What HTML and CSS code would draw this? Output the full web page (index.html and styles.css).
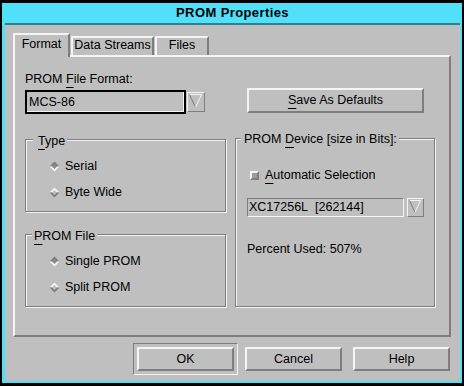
FILE: index.html
```html
<!DOCTYPE html>
<html lang="en">
<head>
    <meta charset="UTF-8">
    <title>PROM Properties</title>
    <link rel="stylesheet" href="styles.css">
</head>
<body>

    <div class="window">
        <div class="frame">
            <div class="titlebar">PROM Properties</div>
            <div class="client">
                <div class="tabs">
                    <div class="tab active tab-format">Format</div>
                    <div class="tab tab-streams">Data Streams</div>
                    <div class="tab tab-files">Files</div>
                </div>

                <div class="panel">
                    <div class="panel-top">
                        <div>
                            <div class="field-label">PROM <u>F</u>ile Format:</div>
                            <div class="combo">
                                <div class="text-field focused">MCS-86</div>
                                <div class="arrow-btn">
                                    <svg width="16" height="18" viewBox="0 0 16 18">
                                        <line x1="1.5" y1="1.5" x2="13.5" y2="1.5" stroke="#f4f4f4"/>
                                        <line x1="1.5" y1="1.5" x2="7.5" y2="14.5" stroke="#7e7e7e"/>
                                        <line x1="13.5" y1="1.5" x2="7.5" y2="14.5" stroke="#f4f4f4"/>
                                    </svg>
                                </div>
                            </div>
                        </div>
                        <div>
                            <div class="push-btn save-btn"><u>S</u>ave As Defaults</div>
                        </div>
                    </div>

                    <div class="panel-groups">
                        <div class="left-col">
                            <div class="group">
                                <span class="group-title title-type"><u>T</u>ype</span>
                                <div class="radio-list">
                                    <div class="radio-row">
                                        <svg class="diamond" width="11" height="11" viewBox="0 0 11 11">
                                            <polygon points="0.5,5.5 5.5,0.5 10.5,5.5" fill="#7e7e7e"/>
                                            <polygon points="0.5,5.5 5.5,10.5 10.5,5.5" fill="#f4f4f4"/>
                                            <polygon points="5.5,3 8,5.5 5.5,8 3,5.5" fill="#8a8a8a"/>
                                        </svg>
                                        Serial
                                    </div>
                                    <div class="radio-row">
                                        <svg class="diamond" width="11" height="11" viewBox="0 0 11 11">
                                            <polygon points="0.5,5.5 5.5,0.5 10.5,5.5" fill="#f4f4f4"/>
                                            <polygon points="0.5,5.5 5.5,10.5 10.5,5.5" fill="#7e7e7e"/>
                                            <polygon points="5.5,3 8,5.5 5.5,8 3,5.5" fill="#bfbfbf"/>
                                        </svg>
                                        Byte Wide
                                    </div>
                                </div>
                            </div>

                            <div class="group group-file">
                                <span class="group-title"><u>P</u>ROM File</span>
                                <div class="radio-list">
                                    <div class="radio-row">
                                        <svg class="diamond" width="11" height="11" viewBox="0 0 11 11">
                                            <polygon points="0.5,5.5 5.5,0.5 10.5,5.5" fill="#7e7e7e"/>
                                            <polygon points="0.5,5.5 5.5,10.5 10.5,5.5" fill="#f4f4f4"/>
                                            <polygon points="5.5,3 8,5.5 5.5,8 3,5.5" fill="#8a8a8a"/>
                                        </svg>
                                        Single PROM
                                    </div>
                                    <div class="radio-row">
                                        <svg class="diamond" width="11" height="11" viewBox="0 0 11 11">
                                            <polygon points="0.5,5.5 5.5,0.5 10.5,5.5" fill="#f4f4f4"/>
                                            <polygon points="0.5,5.5 5.5,10.5 10.5,5.5" fill="#7e7e7e"/>
                                            <polygon points="5.5,3 8,5.5 5.5,8 3,5.5" fill="#bfbfbf"/>
                                        </svg>
                                        Split PROM
                                    </div>
                                </div>
                            </div>
                        </div>

                        <div class="group group-device">
                            <span class="group-title title-device">PROM <u>D</u>evice [size in Bits]:</span>
                            <div class="device-body">
                                <div class="check-row">
                                    <span class="checkbox"></span>
                                    <span><u>A</u>utomatic Selection</span>
                                </div>
                                <div class="combo combo-device">
                                    <div class="text-field">XC17256L&nbsp;&nbsp;[262144]</div>
                                    <div class="arrow-btn">
                                        <svg width="15" height="17" viewBox="0 0 15 17">
                                            <line x1="1.5" y1="1.5" x2="12.5" y2="1.5" stroke="#f4f4f4"/>
                                            <line x1="1.5" y1="1.5" x2="7" y2="13.5" stroke="#7e7e7e"/>
                                            <line x1="12.5" y1="1.5" x2="7" y2="13.5" stroke="#f4f4f4"/>
                                        </svg>
                                    </div>
                                </div>
                                <div class="percent">Percent Used: 507%</div>
                            </div>
                        </div>
                    </div>
                </div>

                <div class="actions">
                    <div class="default-ring">
                        <div class="push-btn">OK</div>
                    </div>
                    <div class="push-btn btn-cancel">Cancel</div>
                    <div class="push-btn btn-help">Help</div>
                </div>
            </div>
        </div>
    </div>

</body>
</html>
```

FILE: styles.css
```css
body {
    margin: 0;
    background: #000;
    font-family: 'Liberation Sans', Arial, sans-serif;
    font-size: 12.5px;
    line-height: 15px;
    color: #000;
}
u {
    text-decoration: underline;
    text-underline-offset: 4px;
    text-decoration-thickness: 1px;
}
.window {
    width: 464px;
    height: 386px;
    box-sizing: border-box;
    padding: 3px 2px;
    background: #000;
}
.frame {
    height: 100%;
    box-sizing: border-box;
    padding: 0 2px 2px 3px;
    background: #50e0fa;
    display: flex;
    flex-direction: column;
}
.titlebar {
    height: 22px;
    box-sizing: border-box;
    border-bottom: 2px solid #2f7f8f;
    line-height: 20px;
    text-align: center;
    font-weight: bold;
    font-size: 13px;
    letter-spacing: 0.4px;
}
.client {
    flex: 1;
    background: #bfbfbf;
    padding: 8px 9px 0 8px;
    display: flex;
    flex-direction: column;
}

/* tabs */
.tabs {
    display: flex;
    align-items: flex-end;
    gap: 1px;
    margin-bottom: -2px;
    position: relative;
    z-index: 1;
}
.tab {
    height: 19px;
    box-sizing: border-box;
    margin-bottom: 2px;
    border-top: 2px solid #f4f4f4;
    border-left: 2px solid #f4f4f4;
    border-right: 2px solid #7e7e7e;
    background: #bfbfbf;
    text-align: center;
}
.tab.active {
    height: 24px;
    margin-bottom: 0;
    padding-top: 2px;
}
.tab-format { width: 57px; }
.tab-streams { width: 83px; }
.tab-files { width: 54px; }

.panel {
    height: 282px;
    box-sizing: border-box;
    border: 2px solid;
    border-color: #f4f4f4 #7e7e7e #7e7e7e #f4f4f4;
    padding: 15px 0 0 10px;
}
.panel-top {
    display: grid;
    grid-template-columns: 210px 1fr;
}
.field-label { height: 15px; }

.combo {
    display: flex;
    align-items: center;
    margin-top: 3px;
}
.text-field {
    width: 161px;
    height: 24px;
    box-sizing: border-box;
    border: 2px solid #000;
    box-shadow: inset -1px -1px 0 #f4f4f4;
    padding-left: 2px;
    line-height: 20px;
}
.arrow-btn {
    width: 18px;
    height: 20px;
    box-sizing: border-box;
    margin-left: 1px;
    border: 1px solid;
    border-color: #f4f4f4 #7e7e7e #7e7e7e #f4f4f4;
}
.arrow-btn svg { display: block; }

.push-btn {
    width: 97px;
    height: 24px;
    box-sizing: border-box;
    border: 2px solid;
    border-color: #f4f4f4 #7e7e7e #7e7e7e #f4f4f4;
    display: flex;
    align-items: center;
    justify-content: center;
}
.save-btn {
    width: 177px;
    height: 25px;
    margin: 16px 0 0 12px;
}

/* group boxes */
.panel-groups {
    display: grid;
    grid-template-columns: 210px 1fr;
    margin-top: 24px;
}
.left-col {
    padding-top: 1px;
    display: flex;
    flex-direction: column;
    gap: 22px;
}
.group {
    position: relative;
    width: 201px;
    height: 73px;
    box-sizing: border-box;
    border: 1px solid #7e7e7e;
    box-shadow: inset 1px 1px 0 #f4f4f4, 1px 1px 0 #f4f4f4;
}
.group-title {
    position: absolute;
    top: -6px;
    left: 6px;
    padding: 0 2px;
    background: #bfbfbf;
    white-space: nowrap;
}
.title-type {
    left: 7px;
    padding-left: 5px;
}
.title-device {
    top: -7px;
    left: 5px;
    padding-left: 3px;
}
.radio-list { padding: 13px 0 0 23px; }
.radio-row {
    height: 26px;
    display: flex;
    align-items: center;
}
.diamond { margin-right: 5px; }

.group-device {
    width: 200px;
    height: 169px;
}
.device-body { padding: 26px 0 0 11px; }
.check-row {
    height: 20px;
    display: flex;
    align-items: center;
}
.checkbox {
    width: 9px;
    height: 9px;
    box-sizing: border-box;
    margin: 0 6px 0 3px;
    border: 2px solid;
    border-color: #f4f4f4 #7e7e7e #7e7e7e #f4f4f4;
    background: #9a9a9a;
}
.combo-device { margin-top: 13px; }
.combo-device .text-field {
    width: 157px;
    height: 19px;
    border: 1px solid;
    border-color: #7e7e7e #f4f4f4 #f4f4f4 #7e7e7e;
    box-shadow: none;
    padding-left: 1px;
    line-height: 17px;
}
.combo-device .arrow-btn {
    width: 17px;
    height: 19px;
    margin-left: 3px;
}
.percent { margin-top: 25px; }

/* bottom buttons */
.actions {
    height: 32px;
    margin-top: 6px;
    padding-right: 1px;
    display: flex;
    justify-content: flex-end;
    align-items: center;
}
.default-ring {
    border: 1px solid;
    border-color: #7e7e7e #f4f4f4 #f4f4f4 #7e7e7e;
    padding: 3px;
}
.btn-cancel { margin-left: 7px; }
.btn-help { margin-left: 11px; }
```
